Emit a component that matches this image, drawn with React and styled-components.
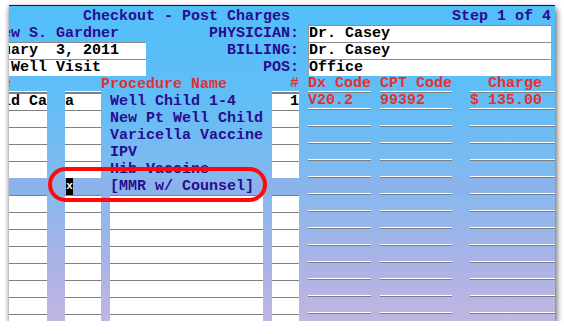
import React from "react";
import styled, { createGlobalStyle } from "styled-components";

const GlobalStyle = createGlobalStyle`
  html, body {
    margin: 0;
    padding: 0;
    background: #fff;
  }
`;

const Page = styled.div`
  padding: 5px 0 0 9px;
`;

const Screen = styled.div`
  position: relative;
  width: 546px;
  height: 316px;
  box-sizing: border-box;
  border-top: 1px solid #1c1c1c;
  background: linear-gradient(
    180deg,
    #52bff9 0%,
    #62bdf6 30%,
    #86b9ef 58%,
    #a8b3e7 80%,
    #c0b6e2 100%
  );
  box-shadow: 2px 4px 6px rgba(0, 0, 0, 0.55), -1px 1px 4px rgba(0, 0, 0, 0.25);
  overflow: hidden;
`;

/* text-mode screen: 9px character cells, 17px rows */
const Terminal = styled.div`
  display: grid;
  grid-template-columns: repeat(62, 9px);
  grid-auto-rows: 17px;
  margin-left: -7px;
  padding-top: 2px;
  font: bold 15px/17px "Liberation Mono", "Courier New", monospace;
  white-space: pre;
`;

const tones = {
  navy: "#2a0c8e",
  red: "#e33131",
  black: "#000",
};

const place = (p) => `
  grid-column: ${p.$col + 1} / span ${p.$span};
  grid-row: ${p.$row};
`;

const Text = styled.span`
  ${place}
  color: ${(p) => tones[p.$tone || "navy"]};
  text-align: ${(p) => p.$align || "left"};
  padding-right: ${(p) => p.$pad || 0}px;
  overflow: hidden;
  z-index: 1;
`;

const Field = styled.div`
  ${place}
  background: #fff;
  border-top: 1px solid #8a8a8a;
  border-left: ${(p) => (p.$edge ? "1px solid #9a9a9a" : "none")};
  color: #000;
  line-height: 16px;
  overflow: hidden;
`;

const Cell = styled.div`
  ${place}
  background: #fff;
  border-top: 1px solid #808080;
  color: #000;
  line-height: 16px;
  text-align: ${(p) => p.$align || "left"};
  overflow: hidden;
`;

const Rule = styled.div`
  ${place}
  border-bottom: 1px solid #7d7d7d;
  box-shadow: inset 0 -1px 0 #fff;
  color: ${tones.red};
  line-height: 16px;
  text-align: ${(p) => p.$align || "left"};
  padding-right: ${(p) => p.$pad || 0}px;
  overflow: hidden;
`;

const SelectedBar = styled.div`
  grid-column: 1 / -1;
  grid-row: ${(p) => p.$row};
  background: #8ab3ec;
`;

const Cursor = styled.span`
  grid-column: ${(p) => p.$col + 1} / span 1;
  grid-row: ${(p) => p.$row};
  margin: 0 1px;
  background: #000;
  color: #fff;
  font-size: 11px;
  text-align: center;
  z-index: 1;
`;

const Callout = styled.div`
  position: absolute;
  z-index: 2;
  left: 39px;
  top: 161px;
  width: 219px;
  height: 35px;
  box-sizing: border-box;
  border: 4px solid #ff0a0a;
  border-radius: 18px;
  pointer-events: none;
`;

const columns = {
  a: { col: 0, span: 5 },
  b: { col: 7, span: 4 },
  c: { col: 12, span: 17 },
  num: { col: 30, span: 3 },
  dx: { col: 34, span: 7 },
  cpt: { col: 42, span: 8 },
  charge: { col: 52, span: 10 },
};

const picks = ["Well Child 1-4", "New Pt Well Child", "Varicella Vaccine", "IPV", "Hib Vaccine"];

const FIRST_ROW = 6;
const ROWS = 14;
const SELECTED = 5;

function DataRow({ index }) {
  const row = FIRST_ROW + index;
  const first = index === 0;
  const selected = index === SELECTED;
  const inList = index < SELECTED;

  return (
    <>
      {!selected && (
        <>
          <Cell $row={row} $col={columns.a.col} $span={columns.a.span}>
            {first ? "ld Ca" : ""}
          </Cell>
          <Cell $row={row} $col={columns.b.col} $span={columns.b.span}>
            {first ? "a" : ""}
          </Cell>
          {!inList && <Cell $row={row} $col={columns.c.col} $span={columns.c.span} />}
          <Cell $row={row} $col={columns.num.col} $span={columns.num.span} $align="right">
            {first ? "1" : ""}
          </Cell>
        </>
      )}
      {inList && (
        <Text $row={row} $col={12} $span={17}>
          {picks[index]}
        </Text>
      )}
      <Rule $row={row} $col={columns.dx.col} $span={columns.dx.span}>
        {first ? "V20.2" : ""}
      </Rule>
      <Rule $row={row} $col={columns.cpt.col} $span={columns.cpt.span}>
        {first ? "99392" : ""}
      </Rule>
      <Rule $row={row} $col={columns.charge.col} $span={columns.charge.span} $align="right" $pad={18}>
        {first ? "$ 135.00" : ""}
      </Rule>
    </>
  );
}

export default function App() {
  return (
    <>
      <GlobalStyle />
      <Page>
        <Screen>
          <Terminal>
            <Text $row={1} $col={9} $span={23}>Checkout - Post Charges</Text>
            <Text $row={1} $col={50} $span={11}>Step 1 of 4</Text>

            <Text $row={2} $col={0} $span={14}>ew S. Gardner</Text>
            <Text $row={2} $col={23} $span={10}>PHYSICIAN:</Text>
            <Field $row={2} $col={34} $span={27} $edge>Dr. Casey</Field>

            <Field $row={3} $col={0} $span={16}>uary  3, 2011</Field>
            <Text $row={3} $col={25} $span={8}>BILLING:</Text>
            <Field $row={3} $col={34} $span={27} $edge>Dr. Casey</Field>

            <Field $row={4} $col={0} $span={16}> Well Visit</Field>
            <Text $row={4} $col={29} $span={4}>POS:</Text>
            <Field $row={4} $col={34} $span={27} $edge>Office</Field>

            <Rule $row={5} $col={columns.a.col} $span={columns.a.span}>e</Rule>
            <Rule $row={5} $col={columns.b.col} $span={columns.b.span} />
            <Text $row={5} $col={11} $span={14} $tone="red">Procedure Name</Text>
            <Rule $row={5} $col={columns.num.col} $span={columns.num.span} $align="right">#</Rule>
            <Rule $row={5} $col={columns.dx.col} $span={columns.dx.span}>Dx Code</Rule>
            <Rule $row={5} $col={columns.cpt.col} $span={columns.cpt.span}>CPT Code</Rule>
            <Rule $row={5} $col={columns.charge.col} $span={columns.charge.span} $align="right" $pad={18}>
              Charge
            </Rule>

            <SelectedBar $row={FIRST_ROW + SELECTED} />
            {Array.from({ length: ROWS }, (_, i) => (
              <DataRow key={i} index={i} />
            ))}
            <Cursor $row={FIRST_ROW + SELECTED} $col={7}>x</Cursor>
            <Text $row={FIRST_ROW + SELECTED} $col={12} $span={17}>[MMR w/ Counsel]</Text>
          </Terminal>
          <Callout />
        </Screen>
      </Page>
    </>
  );
}
